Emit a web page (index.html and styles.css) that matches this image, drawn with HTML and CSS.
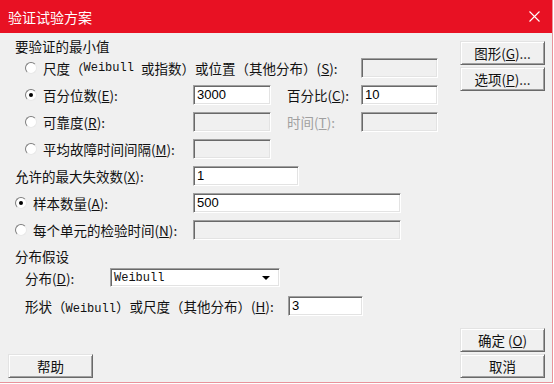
FILE: index.html
```html
<!DOCTYPE html>
<html lang="zh-CN">
<head>
<meta charset="utf-8">
<title>验证试验方案</title>
<link rel="stylesheet" href="styles.css">
</head>
<body>
<div class="window">
  <div class="titlebar">
    <span class="title">验证试验方案</span>
    <svg class="close" width="11" height="11" viewBox="0 0 11 11"><path d="M0.5 0.5L10.5 10.5M10.5 0.5L0.5 10.5" stroke="#fff" stroke-width="1.1" fill="none"/></svg>
  </div>
  <div class="body">
    <div class="main">
      <div class="form">
        <div class="heading">要验证的最小值</div>
        <div class="grid">
          <label class="opt ind span3"><span class="radio"></span>尺度（<span class="m">Weibull </span>或指数）或位置（其他分布）(<u>S</u>):</label>
          <input class="field" disabled>

          <label class="opt ind"><span class="radio on"></span>百分位数(<u>E</u>):</label>
          <input class="field" value="3000">
          <label class="lbl2">百分比(<u>C</u>):</label>
          <input class="field" value="10">

          <label class="opt ind"><span class="radio"></span>可靠度(<u>R</u>):</label>
          <input class="field" disabled>
          <label class="lbl2 dim">时间(<u>T</u>):</label>
          <input class="field" disabled>

          <label class="opt ind"><span class="radio"></span>平均故障时间间隔(<u>M</u>):</label>
          <input class="field" disabled>

          <label class="opt">允许的最大失效数(<u>X</u>):</label>
          <input class="field w106" value="1">

          <label class="opt"><span class="radio on"></span>样本数量(<u>A</u>):</label>
          <input class="field w208" value="500">

          <label class="opt"><span class="radio"></span>每个单元的检验时间(<u>N</u>):</label>
          <input class="field w208" disabled>
        </div>
        <div class="heading2">分布假设</div>
        <div class="distrow">
          <label class="distlbl">分布(<u>D</u>):</label>
          <div class="combo"><span class="m">Weibull</span><span class="arrow"></span></div>
        </div>
        <div class="shaperow">
          <label class="shapelbl">形状（<span class="m">Weibull</span>）或尺度（其他分布）(<u>H</u>):</label>
          <input class="field w75" value="3">
        </div>
      </div>
      <div class="spacer"></div>
      <button class="btn">帮助</button>
    </div>
    <div class="side">
      <button class="btn">图形(<u>G</u>)...</button>
      <button class="btn">选项(<u>P</u>)...</button>
      <div class="spacer"></div>
      <button class="btn">确定 (<u>O</u>)</button>
      <button class="btn">取消</button>
    </div>
  </div>
</div>
</body>
</html>
```
FILE: styles.css
```css
html, body {
  margin: 0;
  padding: 0;
  background: #ffffff;
}

.window {
  width: 553px;
  height: 383px;
  box-sizing: border-box;
  border-right: 1px solid #e9939a;
  border-bottom: 1px solid #e9939a;
  background: #f0f0f0;
  display: flex;
  flex-direction: column;
  font-family: "Noto Sans CJK SC", "Noto Sans", sans-serif;
  font-size: 13.5px;
  color: #111;
}

.titlebar {
  height: 33px;
  flex: none;
  background: #e81123;
  display: flex;
  align-items: center;
  justify-content: space-between;
  padding: 0 12px 0 8px;
  color: #fff;
  font-size: 14px;
}

.close {
  display: block;
}

.body {
  flex: 1;
  display: flex;
  min-height: 0;
}

.main {
  flex: 1;
  display: flex;
  flex-direction: column;
  padding: 0 0 4px 8px;
}

.form {
  padding-left: 7px;
}

.heading {
  margin-top: 6px;
  height: 15px;
  line-height: 15px;
}

.grid {
  display: grid;
  grid-template-columns: 178px 78px 90px 77px;
  grid-auto-rows: 27px;
  align-items: center;
}

.opt {
  grid-column: 1;
  display: flex;
  align-items: center;
  white-space: nowrap;
  line-height: 16px;
}

.opt.span3 {
  grid-column: 1 / span 3;
}

.opt.ind {
  padding-left: 10px;
}

.radio {
  width: 12px;
  height: 12px;
  flex: none;
  box-sizing: border-box;
  border-radius: 50%;
  border: 1px solid;
  border-color: #7d7d7d #e8e8e8 #e8e8e8 #7d7d7d;
  background: #fff;
  margin-right: 6px;
  position: relative;
}

.radio.on::after {
  content: "";
  position: absolute;
  left: 3px;
  top: 3px;
  width: 4px;
  height: 4px;
  border-radius: 50%;
  background: #000;
}

.lbl2 {
  padding-left: 16px;
  white-space: nowrap;
}

.dim {
  color: #a0a0a0;
}

.m {
  font-family: "Liberation Mono", monospace;
  font-size: 12px;
  white-space: pre;
}

.field {
  display: block;
  width: 100%;
  height: 20px;
  box-sizing: border-box;
  margin: 0;
  padding: 0 3px;
  border: 1px solid;
  border-color: #a0a0a0 #ffffff #ffffff #a0a0a0;
  box-shadow: inset 1px 1px #696969, inset -1px -1px #e3e3e3;
  background: #fff;
  font-family: "Liberation Sans", Arial, sans-serif;
  font-size: 13px;
  color: #000;
  outline: none;
}

.field:disabled {
  background: #f0f0f0;
}

.w106 {
  grid-column: 2 / span 2;
  width: 106px;
}

.w208 {
  grid-column: 2 / span 3;
  width: 208px;
}

.w75 {
  width: 75px;
  flex: none;
}

.heading2 {
  margin-top: 3px;
  height: 21px;
  line-height: 21px;
}

.distrow {
  display: flex;
  align-items: center;
  height: 21px;
  padding-left: 10px;
}

.distlbl {
  width: 85px;
  flex: none;
  white-space: nowrap;
}

.combo {
  width: 170px;
  height: 19px;
  box-sizing: border-box;
  border: 1px solid;
  border-color: #a0a0a0 #ffffff #ffffff #a0a0a0;
  box-shadow: inset 1px 1px #696969, inset -1px -1px #e3e3e3;
  background: #fff;
  display: flex;
  align-items: center;
  justify-content: space-between;
  padding: 0 9px 0 3px;
}

.arrow {
  width: 0;
  height: 0;
  border-left: 4px solid transparent;
  border-right: 4px solid transparent;
  border-top: 4px solid #000;
}

.shaperow {
  margin-top: 4px;
  height: 27px;
  display: flex;
  align-items: center;
  padding-left: 10px;
}

.shapelbl {
  width: 263px;
  flex: none;
  white-space: nowrap;
}

.spacer {
  flex: 1;
}

.side {
  width: 85px;
  flex: none;
  margin-right: 7px;
  padding: 8px 0 4px;
  display: flex;
  flex-direction: column;
  gap: 2px;
}

.btn {
  width: 85px;
  height: 24px;
  flex: none;
  box-sizing: border-box;
  margin: 0;
  padding: 0;
  border: 1px solid;
  border-color: #e3e3e3 #696969 #696969 #e3e3e3;
  box-shadow: inset 1px 1px #ffffff, inset -1px -1px #a0a0a0;
  background: #f0f0f0;
  font-family: "Noto Sans CJK SC", "Noto Sans", sans-serif;
  font-size: 13.5px;
  color: #111;
  line-height: 20px;
}
```
